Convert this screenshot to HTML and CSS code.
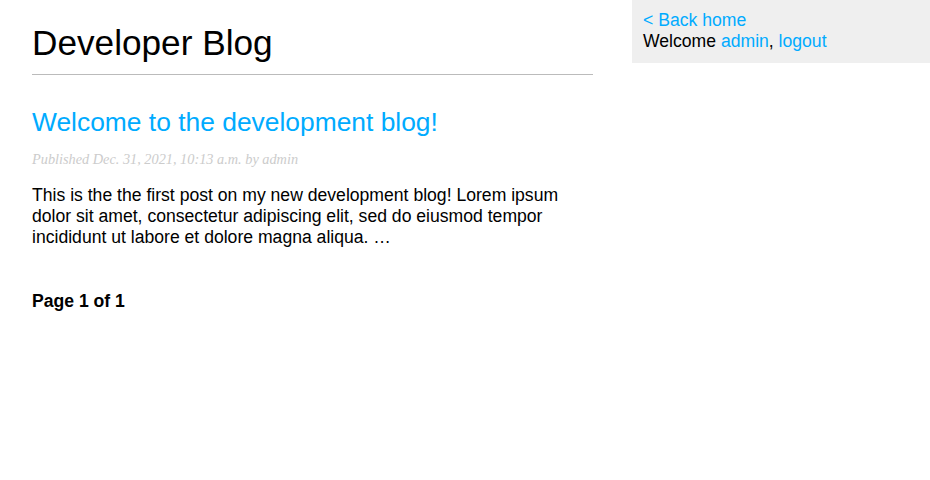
FILE: index.html
```html
<!DOCTYPE html>
<html lang="en">
<head>
<meta charset="utf-8">
<title>Developer Blog</title>
<link rel="stylesheet" href="styles.css">
</head>
<body>
<div class="page">
  <div class="content">
    <h1 class="site-title">Developer Blog</h1>
    <h2 class="post-title"><a href="#">Welcome to the development blog!</a></h2>
    <p class="date">Published Dec. 31, 2021, 10:13 a.m. by admin</p>
    <p class="excerpt">This is the the first post on my new development blog! Lorem ipsum dolor sit amet, consectetur adipiscing elit, sed do eiusmod tempor incididunt ut labore et dolore magna aliqua. …</p>
    <div class="pagination"><span class="current">Page 1 of 1</span></div>
  </div>
  <div class="sidebar">
    <div><a href="#">&lt; Back home</a></div>
    <div>Welcome <a href="#">admin</a>, <a href="#">logout</a></div>
  </div>
</div>
</body>
</html>
```
FILE: styles.css
```css
html, body {
  margin: 0;
  padding: 0;
}
body {
  font-family: "Liberation Sans", Helvetica, Arial, sans-serif;
  font-size: 17.6px;
  color: #000;
  background: #fff;
}
a {
  color: #00abff;
  text-decoration: none;
}
.page {
  display: flex;
  align-items: flex-start;
}
.content {
  width: 561px;
  padding-left: 32px;
  flex: none;
}
.site-title {
  font-weight: normal;
  font-size: 35.2px;
  margin: 22.6px 0 23.6px;
  padding: 0 0 11px 0;
  border-bottom: 1px solid #bbb;
}
.post-title {
  font-weight: normal;
  font-size: 26.4px;
  margin: 32px 0 0;
}
.date {
  color: #ccc;
  font-family: Georgia, "Liberation Serif", serif;
  font-size: 14.3px;
  font-style: italic;
  margin: 13.2px 0;
}
.excerpt {
  margin: 17.6px 0;
}
.pagination {
  margin: 43px 0;
  font-weight: bold;
}
.sidebar {
  margin-left: auto;
  width: 276px;
  padding: 10px 11px 12px;
  background: #efefef;
  line-height: 20.5px;
}
```
